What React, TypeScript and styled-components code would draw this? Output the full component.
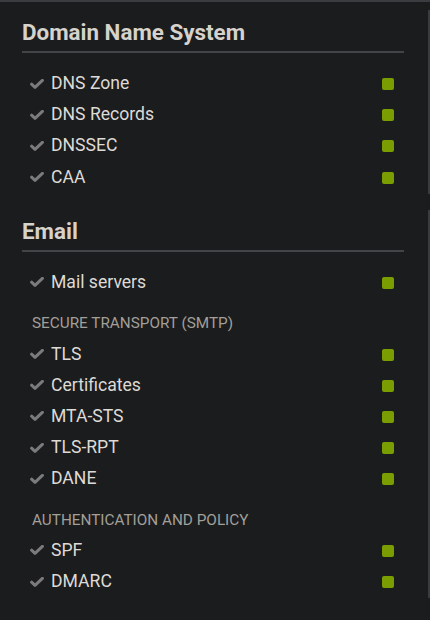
import React from "react";
import styled, { createGlobalStyle } from "styled-components";

const Global = createGlobalStyle`
  html, body { margin: 0; padding: 0; background: #1b1c1e; }
  body { font-family: Roboto, "Liberation Sans", sans-serif; }
`;

const Panel = styled.div`
  position: relative;
  box-sizing: border-box;
  width: 430px;
  height: 620px;
  background: #1b1c1e;
  border-top: 2px solid #3b3c3f;
  padding: 16px 26px 0 22px;
  overflow: hidden;
`;

const ScrollTrack = styled.div`
  position: absolute;
  right: 0;
  top: 8px;
  bottom: 22px;
  width: 2px;
  background: linear-gradient(
    to bottom,
    #3a3b3e 0,
    #3a3b3e 184px,
    transparent 184px,
    transparent 200px,
    #3a3b3e 200px
  );
`;

const Section = styled.section<{ $first?: boolean }>`
  margin-top: ${(p) => (p.$first ? "0" : "24px")};
`;

const Heading = styled.h2`
  margin: 0;
  font-size: 22.4px;
  line-height: 28px;
  font-weight: 700;
  color: #d6d2cc;
  padding-bottom: 5px;
  border-bottom: 2px solid #434447;
`;

const List = styled.div`
  padding-top: 15px;
  display: flex;
  flex-direction: column;
`;

const Group = styled.div`
  margin-top: 15.5px;
  display: flex;
  flex-direction: column;
`;

const SubHeading = styled.div`
  padding-left: 10px;
  font-size: 15.3px;
  line-height: 20px;
  color: #a39f99;
  text-transform: uppercase;
  margin-bottom: 5px;
`;

const Row = styled.div`
  display: flex;
  align-items: center;
  height: 31.2px;
  padding: 0 10px 0 8px;
`;

const Label = styled.span`
  flex: 1;
  margin-left: 7px;
  font-size: 17.6px;
  line-height: 31px;
  color: #dedad5;
`;

const Status = styled.span<{ $color: string }>`
  width: 12px;
  height: 12px;
  border-radius: 2px;
  background: ${(p) => p.$color};
  margin-top: 1px;
`;

const Check = () => (
  <svg width="14" height="10" viewBox="0 0 14 10" aria-hidden="true">
    <path
      d="M1.6 5.2 L5 8.4 L12.4 1.4"
      fill="none"
      stroke="#7b7b7b"
      strokeWidth="3"
      strokeLinejoin="round"
      strokeLinecap="round"
    />
  </svg>
);

const Item = ({ label }: { label: string }) => (
  <Row>
    <Check />
    <Label>{label}</Label>
    <Status $color="#7a9e02" />
  </Row>
);

export default function App() {
  return (
    <>
      <Global />
      <Panel>
        <ScrollTrack />
        <Section $first>
          <Heading>Domain Name System</Heading>
          <List>
            {["DNS Zone", "DNS Records", "DNSSEC", "CAA"].map((l) => (
              <Item key={l} label={l} />
            ))}
          </List>
        </Section>
        <Section>
          <Heading>Email</Heading>
          <List>
            <Item label="Mail servers" />
            <Group>
              <SubHeading>Secure transport (SMTP)</SubHeading>
              {["TLS", "Certificates", "MTA-STS", "TLS-RPT", "DANE"].map((l) => (
                <Item key={l} label={l} />
              ))}
            </Group>
            <Group>
              <SubHeading>Authentication and policy</SubHeading>
              {["SPF", "DMARC"].map((l) => (
                <Item key={l} label={l} />
              ))}
            </Group>
          </List>
        </Section>
      </Panel>
    </>
  );
}
